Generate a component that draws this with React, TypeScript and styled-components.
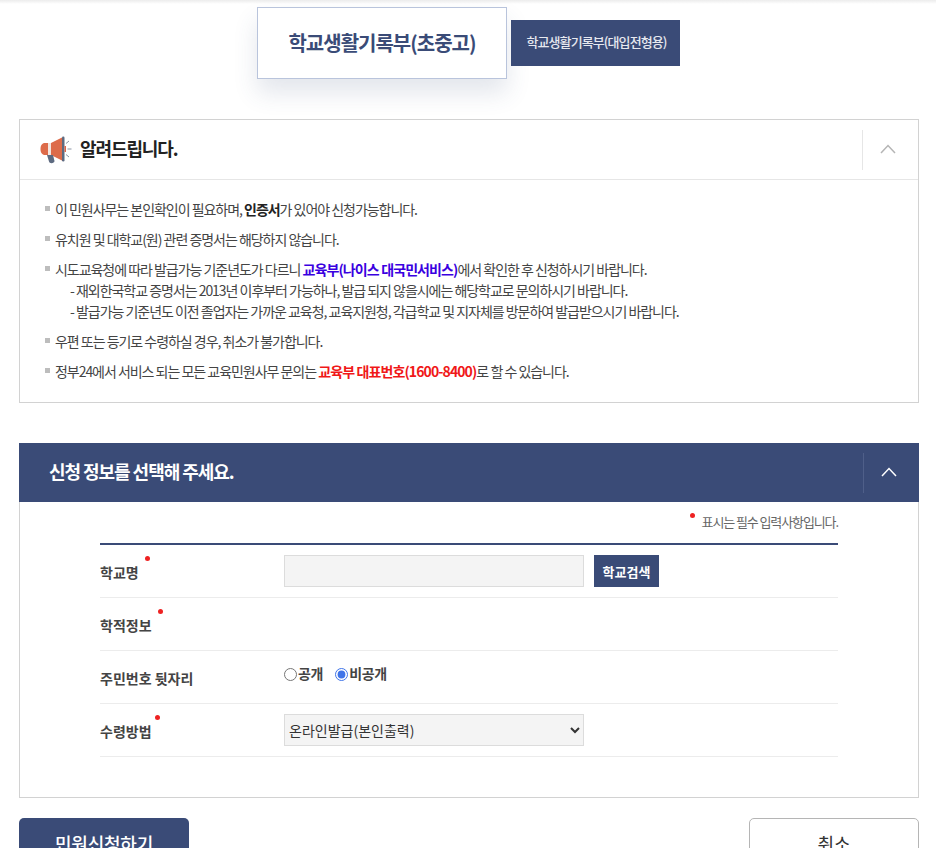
import React from 'react'
import styled, { createGlobalStyle } from 'styled-components'

const navy = '#3a4b77'
const fontStack = '"Noto Sans CJK KR", "Noto Sans", sans-serif'

const GlobalStyle = createGlobalStyle`
    html, body {
        margin: 0;
        padding: 0;
        height: 848px;
        overflow: hidden;
        background: #fff;
    }
    * {
        box-sizing: border-box;
    }
    body {
        font-family: ${fontStack};
        color: #333;
    }
`

const Megaphone = () => (
    <svg width="32" height="28" viewBox="0 0 32 28" fill="none">
        <path d="M8 7 L8 19 L5 19 C2 19 0.5 16.5 0.5 13 C0.5 9.5 2 7 5 7 Z" fill="#dd6b4a" />
        <rect x="8" y="7" width="3" height="12" fill="#f3e6e0" />
        <path d="M11 7 L22 1.5 L22 24.5 L11 19 Z" fill="#dd6b4a" />
        <rect x="22" y="0.5" width="2.5" height="25" rx="1.2" fill="#5d6a80" />
        <path d="M7 19 L13 19 L14.5 25 C14.5 27.5 9.5 28 9 25.5 Z" fill="#5d6a80" />
        <rect x="24.5" y="10" width="1.5" height="6" fill="#d9644a" />
        <path d="M26 7.5 L29 5 M27.5 13 L31.5 13 M26 18.5 L29 21" stroke="#8a93a3" strokeWidth="1" />
    </svg>
)

const Chevron = ({ stroke }: { stroke: string }) => (
    <svg width="16" height="10" viewBox="0 0 16 10" fill="none">
        <path d="M1 9 L8 1.5 L15 9" stroke={stroke} strokeWidth="1.5" />
    </svg>
)

const App = () => {
    return (
        <Page>
            <GlobalStyle />
            <TopShade />
            <Tabs>
                <ActiveTab>학교생활기록부(초중고)</ActiveTab>
                <Tab>학교생활기록부(대입전형용)</Tab>
            </Tabs>

            <NoticeBox>
                <NoticeHeader>
                    <Megaphone />
                    <NoticeTitle>알려드립니다.</NoticeTitle>
                    <NoticeToggle>
                        <Chevron stroke="#b5b5b5" />
                    </NoticeToggle>
                </NoticeHeader>
                <NoticeList>
                    <NoticeItem>
                        이 민원사무는 본인확인이 필요하며, <strong>인증서</strong>가 있어야 신청가능합니다.
                    </NoticeItem>
                    <NoticeItem>유치원 및 대학교(원) 관련 증명서는 해당하지 않습니다.</NoticeItem>
                    <NoticeItem>
                        시도교육청에 따라 발급가능 기준년도가 다르니{' '}
                        <Highlight $tone="#3a00e0">교육부(나이스 대국민서비스)</Highlight>에서 확인한 후 신청하시기 바랍니다.
                        <SubLine>- 재외한국학교 증명서는 2013년 이후부터 가능하나, 발급 되지 않을시에는 해당학교로 문의하시기 바랍니다.</SubLine>
                        <SubLine>- 발급가능 기준년도 이전 졸업자는 가까운 교육청, 교육지원청, 각급학교 및 지자체를 방문하여 발급받으시기 바랍니다.</SubLine>
                    </NoticeItem>
                    <NoticeItem>우편 또는 등기로 수령하실 경우, 취소가 불가합니다.</NoticeItem>
                    <NoticeItem>
                        정부24에서 서비스 되는 모든 교육민원사무 문의는{' '}
                        <Highlight $tone="#f01818">교육부 대표번호(1600-8400)</Highlight>로 할 수 있습니다.
                    </NoticeItem>
                </NoticeList>
            </NoticeBox>

            <FormPanel>
                <FormHeader>
                    <FormTitle>신청 정보를 선택해 주세요.</FormTitle>
                    <FormToggle>
                        <Chevron stroke="#ffffff" />
                    </FormToggle>
                </FormHeader>
                <FormBody>
                    <RequiredNote>표시는 필수 입력사항입니다.</RequiredNote>
                    <Rows>
                        <Row>
                            <Label $dotLeft={45}>학교명</Label>
                            <TextInput readOnly />
                            <SearchButton>학교검색</SearchButton>
                        </Row>
                        <Row>
                            <Label $dotLeft={58}>학적정보</Label>
                        </Row>
                        <Row>
                            <Label>주민번호 뒷자리</Label>
                            <RadioGroup>
                                <RadioLabel>
                                    <Radio name="rrn" />공개
                                </RadioLabel>
                                <RadioLabel>
                                    <Radio name="rrn" defaultChecked />비공개
                                </RadioLabel>
                            </RadioGroup>
                        </Row>
                        <Row>
                            <Label $dotLeft={55}>수령방법</Label>
                            <Select defaultValue="online">
                                <option value="online">온라인발급(본인출력)</option>
                            </Select>
                        </Row>
                    </Rows>
                </FormBody>
            </FormPanel>

            <Actions>
                <SubmitButton>민원신청하기</SubmitButton>
                <CancelButton>취소</CancelButton>
            </Actions>
        </Page>
    )
}

const Page = styled.div`
    position: relative;
    height: 848px;
    overflow: hidden;
    padding: 7px 17px 0 19px;
`

const TopShade = styled.div`
    position: absolute;
    top: 0;
    left: 0;
    right: 0;
    height: 4px;
    background: linear-gradient(#ececec, #fff);
`

const Tabs = styled.div`
    position: relative;
    display: flex;
    justify-content: center;
    align-items: center;
    gap: 4px;
    height: 72px;
    margin-left: -1px;
    margin-bottom: 40px;
`

const ActiveTab = styled.div`
    width: 250px;
    height: 72px;
    border: 1px solid #b9c4dc;
    background: #fff;
    box-shadow: 0 14px 24px rgba(58, 75, 119, 0.14);
    display: flex;
    align-items: center;
    justify-content: center;
    padding-bottom: 2px;
    font-size: 20px;
    font-weight: 700;
    letter-spacing: -1px;
    color: ${navy};
`

const Tab = styled.div`
    width: 169px;
    height: 46px;
    background: ${navy};
    display: flex;
    align-items: center;
    justify-content: center;
    padding: 0 0 3px 2px;
    font-size: 13px;
    font-weight: 500;
    letter-spacing: -0.9px;
    color: #e6e8ef;
`

const NoticeBox = styled.section`
    position: relative;
    border: 1px solid #d2d2d2;
    height: 284px;
    margin-bottom: 40px;
    background: #fff;
`

const NoticeHeader = styled.div`
    height: 60px;
    display: flex;
    align-items: center;
    gap: 8px;
    padding-left: 20px;
    border-bottom: 1px solid #e6e6e6;
`

const NoticeTitle = styled.h2`
    margin: 0 0 3px;
    font-size: 18px;
    font-weight: 700;
    letter-spacing: -1.1px;
    color: #222;
`

const NoticeToggle = styled.div`
    margin-left: auto;
    width: 56px;
    height: 40px;
    border-left: 1px solid #e6e6e6;
    padding: 0 6px 2px 0;
    display: flex;
    align-items: center;
    justify-content: center;
`

const NoticeList = styled.ul`
    list-style: none;
    margin: 0;
    padding: 19px 24px 0 35px;
`

const NoticeItem = styled.li`
    position: relative;
    font-size: 14px;
    line-height: 21px;
    letter-spacing: -1.05px;
    word-spacing: 0.1px;
    color: #444;
    margin-bottom: 9px;
    strong {
        font-weight: 700;
        color: #222;
    }
    &::before {
        content: '';
        position: absolute;
        left: -10px;
        top: 7px;
        width: 5px;
        height: 5px;
        background: #bdbdbd;
    }
`

const SubLine = styled.div`
    padding-left: 15px;
`

const Highlight = styled.b<{ $tone: string }>`
    font-weight: 700;
    letter-spacing: -0.9px;
    color: ${props => props.$tone};
`

const FormPanel = styled.section`
    height: 355px;
    margin-bottom: 20px;
    display: flex;
    flex-direction: column;
`

const FormHeader = styled.div`
    height: 59px;
    flex: none;
    background: ${navy};
    display: flex;
    align-items: center;
    padding-left: 30px;
`

const FormTitle = styled.h2`
    margin: 0 0 3px;
    font-size: 18px;
    font-weight: 700;
    letter-spacing: -1.05px;
    color: #fff;
`

const FormToggle = styled.div`
    margin-left: auto;
    width: 56px;
    height: 40px;
    border-left: 1px solid #4f5f89;
    padding: 0 6px 2px 0;
    display: flex;
    align-items: center;
    justify-content: center;
`

const FormBody = styled.div`
    flex: 1;
    border: 1px solid #d2d2d2;
    border-top: 0;
    padding: 10px 80px 0;
`

const RequiredNote = styled.p`
    position: relative;
    margin: 0 0 11px;
    text-align: right;
    font-size: 13px;
    line-height: 20px;
    letter-spacing: -1.1px;
    color: #666;
    &::before {
        content: '';
        position: absolute;
        right: 143px;
        top: 1px;
        width: 5px;
        height: 5px;
        border-radius: 50%;
        background: #ee2222;
    }
`

const Rows = styled.div`
    border-top: 2px solid ${navy};
`

const Row = styled.div`
    height: 53px;
    display: flex;
    align-items: center;
    border-bottom: 1px solid #ececec;
`

const Label = styled.div<{ $dotLeft?: number }>`
    position: relative;
    width: 184px;
    flex: none;
    font-size: 14px;
    font-weight: 700;
    letter-spacing: 0;
    color: #444;
    padding-top: 1px;
    &::after {
        content: '';
        display: ${props => (props.$dotLeft === undefined ? 'none' : 'block')};
        position: absolute;
        left: ${props => props.$dotLeft ?? 0}px;
        top: -5px;
        width: 5px;
        height: 5px;
        border-radius: 50%;
        background: #ee2222;
    }
`

const TextInput = styled.input`
    width: 300px;
    height: 32px;
    border: 1px solid #dcdcdc;
    background: #f4f4f4;
    padding: 0 4px;
`

const SearchButton = styled.button`
    margin-left: 10px;
    width: 65px;
    height: 32px;
    border: 0;
    padding: 0;
    background: ${navy};
    color: #fff;
    font-family: ${fontStack};
    font-size: 13px;
    font-weight: 700;
`

const RadioGroup = styled.div`
    display: flex;
    gap: 12px;
    margin-top: -8px;
`

const RadioLabel = styled.label`
    display: flex;
    align-items: center;
    font-size: 14px;
    font-weight: 700;
    letter-spacing: -0.3px;
    color: #444;
`

const Radio = styled.input.attrs({ type: 'radio' })`
    margin: 2px 1px 0 0;
    width: 13px;
    height: 13px;
    accent-color: #3f74e8;
`

const Select = styled.select`
    width: 300px;
    height: 32px;
    border: 1px solid #dcdcdc;
    background: #f4f4f4;
    font-family: ${fontStack};
    font-size: 14px;
    color: #333;
    padding: 0;
`

const Actions = styled.div`
    display: flex;
    justify-content: space-between;
`

const SubmitButton = styled.button`
    width: 170px;
    height: 50px;
    border: 0;
    border-radius: 5px;
    background: ${navy};
    color: #fff;
    font-family: ${fontStack};
    font-size: 18px;
    font-weight: 500;
    letter-spacing: -0.2px;
    padding-bottom: 2px;
`

const CancelButton = styled.button`
    width: 170px;
    height: 50px;
    border: 1px solid #b5b5b5;
    border-radius: 5px;
    background: #fff;
    color: #333;
    font-family: ${fontStack};
    font-size: 18px;
    padding-bottom: 2px;
`

export default App
